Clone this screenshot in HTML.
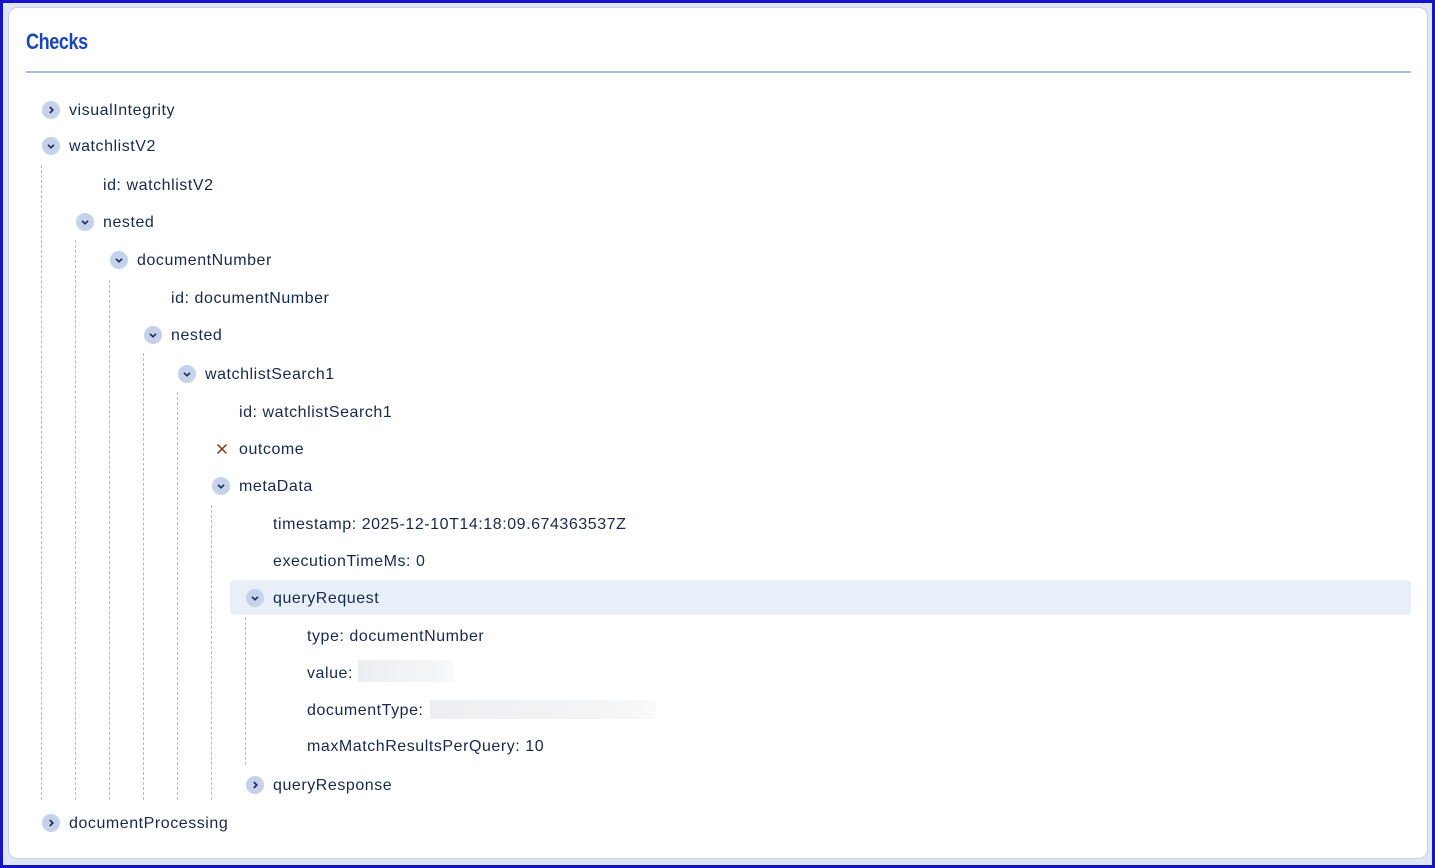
<!DOCTYPE html>
<html><head><style>
html,body{margin:0;padding:0}
body{width:1435px;height:868px;position:relative;overflow:hidden;background:#dfe7f6;font-family:"Liberation Sans",sans-serif;color:#17294f}
.frame{position:absolute;left:0;top:0;width:1429px;height:862px;border:3px solid #1414cc}
.card{position:absolute;left:8px;top:7px;width:1418px;height:850px;background:#fff;border:1px solid #c4d0e8;border-radius:9px}
h1{position:absolute;left:26px;top:29px;margin:0;font-size:22px;font-weight:bold;color:#1a47b8;letter-spacing:-0.5px;transform:scaleX(0.82);transform-origin:left}
.rule{position:absolute;left:26px;top:71px;width:1385px;height:2px;background:#a9bde6}
.t{position:absolute;font-size:16px;line-height:20px;white-space:nowrap;letter-spacing:0.55px}
.ic{position:absolute;width:18px;height:18px;border-radius:50%;background:#c5d2ec}
.ic svg{position:absolute;left:3px;top:3px}
.v{position:absolute;width:0;border-left:1px dashed #b8b8b8}
.hl{position:absolute;left:230px;top:580px;width:1181px;height:35px;background:#e8eff8;border-radius:4px}
.blur{position:absolute;height:20px;background:linear-gradient(90deg,#eceef1,#f4f5f7 80%,#fafafa)}
</style></head><body>
<div class="frame"></div>
<div class="card"></div>
<h1>Checks</h1>
<div class="rule"></div>
<div class="hl"></div>
<div class="v" style="left:41px;top:165px;height:635px"></div>
<div class="v" style="left:75px;top:240px;height:560px"></div>
<div class="v" style="left:109px;top:280px;height:520px"></div>
<div class="v" style="left:143px;top:353px;height:447px"></div>
<div class="v" style="left:177px;top:392px;height:408px"></div>
<div class="v" style="left:211px;top:505px;height:295px"></div>
<div class="v" style="left:245px;top:617px;height:148px"></div>

<div class="ic" style="left:42px;top:101px"><svg width="12" height="12"><path d="M4.8 3L7.8 6L4.8 9" fill="none" stroke="#17294f" stroke-width="1.6"/></svg></div>
<div class="t" style="left:69px;top:101px">visualIntegrity</div>
<div class="ic" style="left:42px;top:137px"><svg width="12" height="12"><path d="M3 4.8L6 7.8L9 4.8" fill="none" stroke="#17294f" stroke-width="1.6"/></svg></div>
<div class="t" style="left:69px;top:137px">watchlistV2</div>
<div class="t" style="left:103px;top:176px">id: watchlistV2</div>
<div class="ic" style="left:76px;top:213px"><svg width="12" height="12"><path d="M3 4.8L6 7.8L9 4.8" fill="none" stroke="#17294f" stroke-width="1.6"/></svg></div>
<div class="t" style="left:103px;top:213px">nested</div>
<div class="ic" style="left:110px;top:251px"><svg width="12" height="12"><path d="M3 4.8L6 7.8L9 4.8" fill="none" stroke="#17294f" stroke-width="1.6"/></svg></div>
<div class="t" style="left:137px;top:251px">documentNumber</div>
<div class="t" style="left:171px;top:289px">id: documentNumber</div>
<div class="ic" style="left:144px;top:326px"><svg width="12" height="12"><path d="M3 4.8L6 7.8L9 4.8" fill="none" stroke="#17294f" stroke-width="1.6"/></svg></div>
<div class="t" style="left:171px;top:326px">nested</div>
<div class="ic" style="left:178px;top:365px"><svg width="12" height="12"><path d="M3 4.8L6 7.8L9 4.8" fill="none" stroke="#17294f" stroke-width="1.6"/></svg></div>
<div class="t" style="left:205px;top:365px">watchlistSearch1</div>
<div class="t" style="left:239px;top:403px">id: watchlistSearch1</div>
<svg style="position:absolute;left:216px;top:443px" width="12" height="12"><path d="M1.5 1.5L10.5 10.5M10.5 1.5L1.5 10.5" stroke="#7a3a10" stroke-width="1.5"/></svg>
<div class="t" style="left:239px;top:440px">outcome</div>
<div class="ic" style="left:212px;top:477px"><svg width="12" height="12"><path d="M3 4.8L6 7.8L9 4.8" fill="none" stroke="#17294f" stroke-width="1.6"/></svg></div>
<div class="t" style="left:239px;top:477px">metaData</div>
<div class="t" style="left:273px;top:515px">timestamp: 2025-12-10T14:18:09.674363537Z</div>
<div class="t" style="left:273px;top:552px">executionTimeMs: 0</div>
<div class="ic" style="left:246px;top:589px"><svg width="12" height="12"><path d="M3 4.8L6 7.8L9 4.8" fill="none" stroke="#17294f" stroke-width="1.6"/></svg></div>
<div class="t" style="left:273px;top:589px">queryRequest</div>
<div class="t" style="left:307px;top:627px">type: documentNumber</div>
<div class="t" style="left:307px;top:664px">value:</div>
<div class="blur" style="left:358px;top:660px;width:96px;height:22px"></div>
<div class="t" style="left:307px;top:701px">documentType:</div>
<div class="blur" style="left:430px;top:700px;width:226px;height:19px"></div>
<div class="t" style="left:307px;top:737px">maxMatchResultsPerQuery: 10</div>
<div class="ic" style="left:246px;top:776px"><svg width="12" height="12"><path d="M4.8 3L7.8 6L4.8 9" fill="none" stroke="#17294f" stroke-width="1.6"/></svg></div>
<div class="t" style="left:273px;top:776px">queryResponse</div>
<div class="ic" style="left:42px;top:814px"><svg width="12" height="12"><path d="M4.8 3L7.8 6L4.8 9" fill="none" stroke="#17294f" stroke-width="1.6"/></svg></div>
<div class="t" style="left:69px;top:814px">documentProcessing</div>
</body></html>
